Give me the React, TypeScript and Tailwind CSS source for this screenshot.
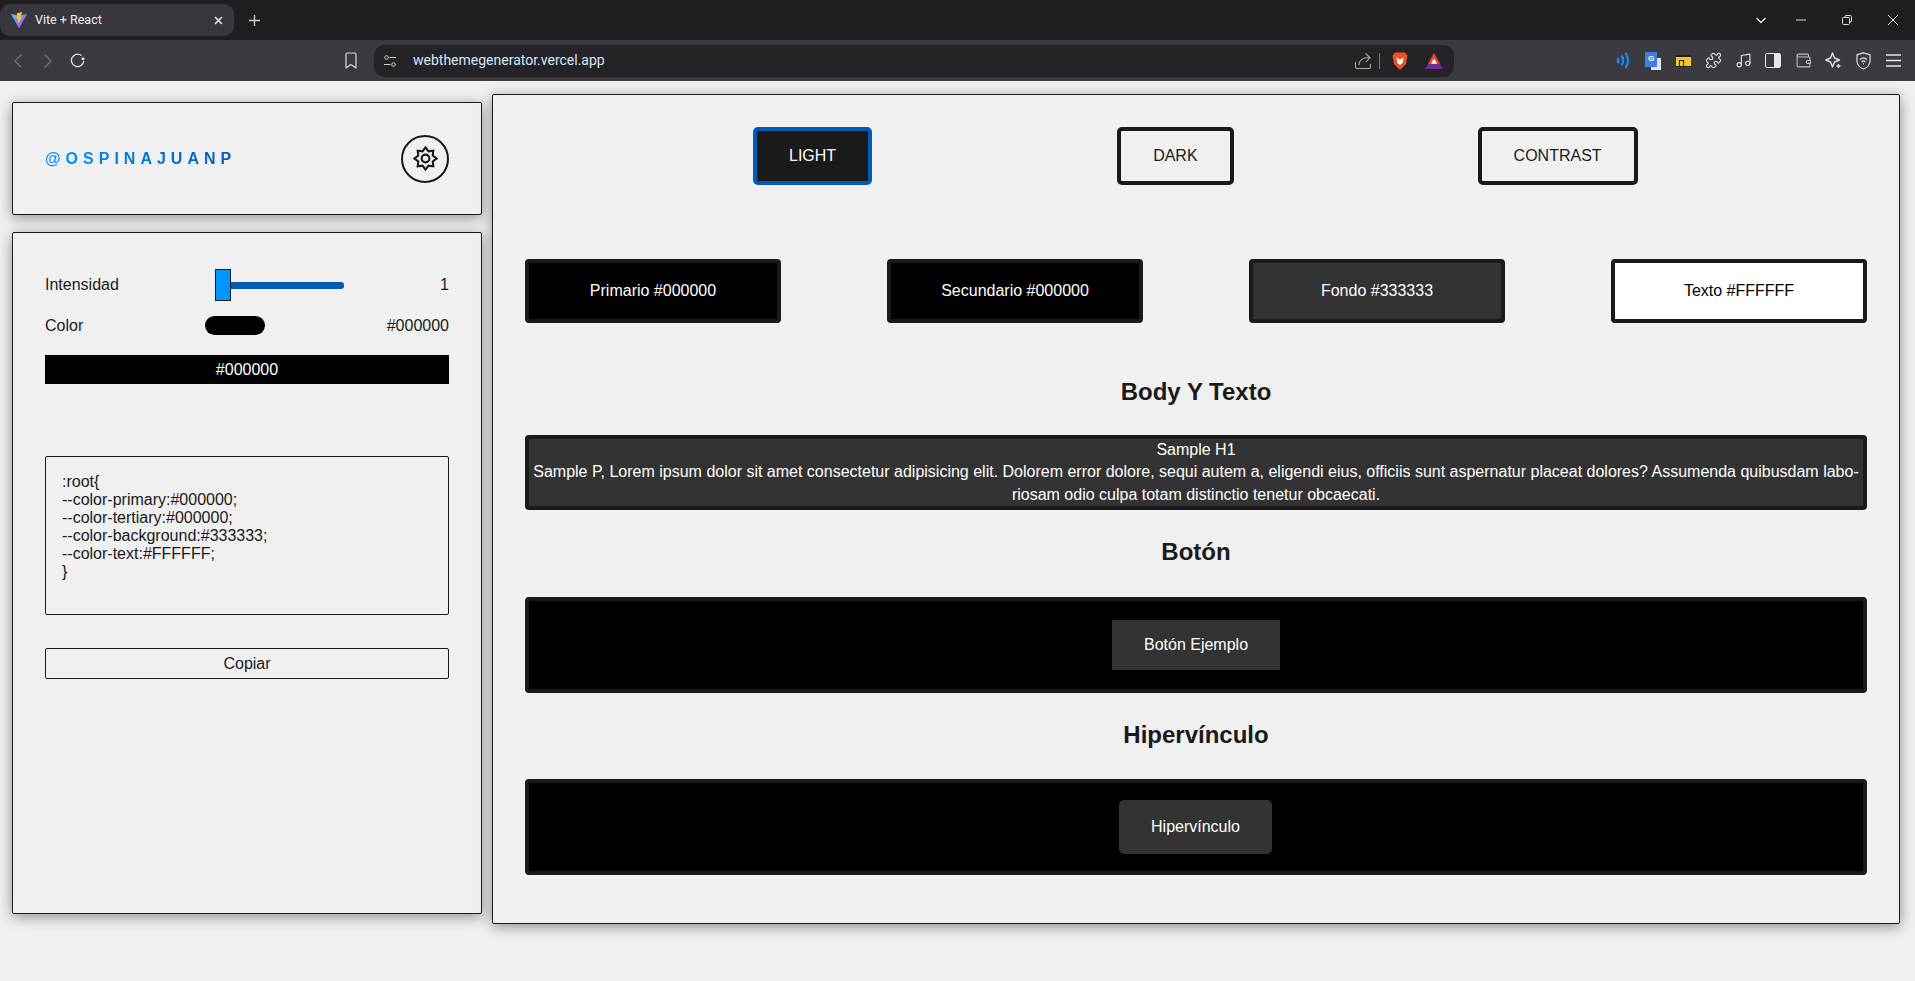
import { Music, Puzzle, Wallet } from 'lucide-react'

const font = "font-['Liberation_Sans',Arial,sans-serif]"

function ViteIcon() {
  return (
    <svg width="16" height="16" viewBox="0 0 16 16">
      <defs>
        <linearGradient id="viteBody" x1="0" y1="0" x2="1" y2="1">
          <stop offset="0" stopColor="#41d1ff" />
          <stop offset="1" stopColor="#bd34fe" />
        </linearGradient>
      </defs>
      <path d="M0 2 L8 3.4 L16 2 L8.3 16 Q8 16.4 7.7 16 Z" fill="url(#viteBody)" />
      <path d="M11.3 0 L6 1.2 L5.7 7.4 L7.4 7 L7 10.8 L7.8 11 L11.4 4.6 L9.6 5 Z" fill="#ffc517" />
    </svg>
  )
}

function BrowserChrome() {
  return (
    <div className="shrink-0">
      {/* Tab strip */}
      <div className="h-[40px] bg-[#1e1e22] flex items-center text-white">
        <div className="w-[234px] h-[32px] bg-[#37373d] rounded-[10px] flex items-center pl-[11px] pr-[11px]">
          <ViteIcon />
          <span className="ml-[8px] text-[12.5px] font-['Roboto',sans-serif] text-[#f0f0f0] flex-1">Vite + React</span>
          <svg width="9" height="9" viewBox="0 0 9 9" stroke="#e8e8e8" strokeWidth="1.6">
            <path d="M1 1 L8 8 M8 1 L1 8" />
          </svg>
        </div>
        <svg width="11" height="11" viewBox="0 0 11 11" stroke="#c8c8c8" strokeWidth="1.4" className="ml-[15px]">
          <path d="M5.5 0 V11 M0 5.5 H11" />
        </svg>
        <div className="ml-auto flex items-center mr-[17px]">
          <svg width="10" height="10" viewBox="0 0 10 10" fill="none" stroke="#e8e8e8" strokeWidth="1.4">
            <path d="M0.5 3 L5 7.5 L9.5 3" />
          </svg>
          <svg width="10" height="10" viewBox="0 0 10 10" stroke="#e0e0e0" strokeWidth="1" className="ml-[30px]">
            <path d="M0 5 H10" />
          </svg>
          <svg width="10" height="10" viewBox="0 0 10 10" fill="none" stroke="#e0e0e0" strokeWidth="1" className="ml-[36px]">
            <rect x="0.5" y="2.5" width="7" height="7" rx="1" />
            <path d="M3 2.5 V1.5 Q3 0.5 4 0.5 H8.5 Q9.5 0.5 9.5 1.5 V6 Q9.5 7 8 7" />
          </svg>
          <svg width="10" height="10" viewBox="0 0 10 10" stroke="#e0e0e0" strokeWidth="1" className="ml-[36px]">
            <path d="M0 0 L10 10 M10 0 L0 10" />
          </svg>
        </div>
      </div>
      {/* Toolbar */}
      <div className="h-[41px] bg-[#3a3a40] flex items-center">
        <svg width="8" height="14" viewBox="0 0 8 14" fill="none" stroke="#77777c" strokeWidth="1.2" className="ml-[14px]">
          <path d="M7.5 0.5 L0.8 7 L7.5 13.5" />
        </svg>
        <svg width="8" height="14" viewBox="0 0 8 14" fill="none" stroke="#77777c" strokeWidth="1.2" className="ml-[22px]">
          <path d="M0.5 0.5 L7.2 7 L0.5 13.5" />
        </svg>
        <svg width="16" height="15" viewBox="0 0 16 15" fill="none" stroke="#e6e6e6" strokeWidth="1.3" className="ml-[18px]">
          <path d="M11.5 2.5 A6.2 6.2 0 1 0 13.8 8" />
          <circle cx="13" cy="5.8" r="1.5" fill="#e6e6e6" stroke="none" />
        </svg>
        <svg width="12" height="17" viewBox="0 0 12 17" fill="none" stroke="#dadada" strokeWidth="1.2" strokeLinejoin="round" className="ml-[259px]">
          <path d="M1 2.5 Q1 1 2.5 1 H9.5 Q11 1 11 2.5 V16 L6 12.5 L1 16 Z" />
        </svg>
        <div className="ml-[17px] w-[1080px] h-[32px] bg-[#232328] rounded-[10px] flex items-center pl-[10px] pr-[11px]">
          <svg width="12" height="12" viewBox="0 0 12 12" fill="none" stroke="#cfcfcf" strokeWidth="1">
            <circle cx="2.5" cy="2.5" r="1.8" />
            <path d="M5.5 2.5 H12 M0 9.5 H6.5" />
            <circle cx="9.5" cy="9.5" r="1.8" />
          </svg>
          <span className="ml-[17px] text-[14px] font-['Roboto',sans-serif] text-[#d6e6f5]">webthemegenerator.vercel.app</span>
          <svg width="16" height="16" viewBox="0 0 16 16" fill="none" stroke="#a8a8a8" strokeWidth="1.1" className="ml-auto">
            <path d="M0.5 9 V14 Q0.5 15.5 2 15.5 H14 Q15.5 15.5 15.5 14 V11" />
            <path d="M4 12 C4 7 8 4.5 14.5 4.5 M10.5 0.5 L15 4.5 L11 9" />
          </svg>
          <div className="ml-[8px] w-px h-[16px] bg-[#77777c]" />
          <svg width="16" height="18" viewBox="0 0 16 18" className="ml-[12px]">
            <path d="M3 0.5 H13 L15.5 3.5 L14 12 L8 18 L2 12 L0.5 3.5 Z" fill="#f1501f" />
            <path d="M4.5 5.5 L8 7.5 L11.5 5.5 L10.5 11 L8 13 L5.5 11 Z" fill="#fff" />
          </svg>
          <svg width="18" height="16" viewBox="0 0 18 16" className="ml-[17px]">
            <path d="M9 0 L18 16 H0 Z" fill="#6b2c91" />
            <path d="M9 0 L15 10.7 H3 Z" fill="#f0431f" />
            <path d="M9 5 L12 10.7 H6 Z" fill="#fff" />
          </svg>
        </div>

        {/* Extensions */}
        <div className="ml-[154px] flex items-center">
          <div className="w-[30px] flex justify-center">
            <svg width="14" height="17" viewBox="0 0 14 17" fill="none" stroke="#1a8cf0" strokeWidth="2.2">
              <path d="M1.5 6 Q3.5 8.5 1.5 11" /><path d="M5.5 3.5 Q9 8.5 5.5 13.5" /><path d="M9.5 1 Q14.5 8.5 9.5 16" />
            </svg>
          </div>
          <div className="w-[30px] flex justify-center">
            <div className="relative w-[16px] h-[18px]">
              <div className="absolute left-[6px] top-[6px] w-[10px] h-[12px] bg-[#dfe3ea]" />
              <div className="absolute left-0 top-0 w-[12px] h-[15px] bg-[#3f7ee8] text-white text-[8px] font-bold flex items-center justify-center">G</div>
            </div>
          </div>
          <div className="w-[30px] flex justify-center">
            <div className="w-[15px] h-[12px] bg-[#f4c430] border-t-2 border-b border-[#222] flex items-end pl-[3px]">
              <div className="w-[5px] h-[6px] border-t border-x border-[#222]" />
            </div>
          </div>
          <div className="w-[30px] flex justify-center"><Puzzle size={17} strokeWidth={1.6} className="text-[#e0e0e0]" /></div>
          <div className="w-[30px] flex justify-center"><Music size={17} strokeWidth={1.6} className="text-[#e0e0e0]" /></div>
          <div className="w-[30px] flex justify-center">
            <div className="w-[16px] h-[15px] border border-[#e8e8e8] rounded-[2px] flex justify-end">
              <div className="w-[6px] h-full bg-[#e8e8e8]" />
            </div>
          </div>
          <div className="w-[30px] flex justify-center"><Wallet size={17} strokeWidth={1.6} className="text-[#bdbdbd]" /></div>
          <div className="w-[30px] flex justify-center">
            <svg width="17" height="17" viewBox="0 0 17 17" fill="none" stroke="#e0e0e0" strokeWidth="1.4" strokeLinejoin="round">
              <path d="M7.5 1 L9.5 6 L14.5 8 L9.5 10 L7.5 15 L5.5 10 L0.8 8 L5.5 6 Z" />
              <path d="M13.5 12 V16 M11.5 14 H15.5" />
            </svg>
          </div>
          <div className="w-[30px] flex justify-center">
            <svg width="15" height="18" viewBox="0 0 15 18" fill="none" stroke="#d0d0d0" strokeWidth="1.3">
              <path d="M7.5 0.8 L14 2.8 V9 C14 13 10.5 16 7.5 17 C4.5 16 1 13 1 9 V2.8 Z" />
              <path d="M4 7.5 Q7.5 4.5 11 7.5 M5.5 9.8 Q7.5 8.2 9.5 9.8" />
              <circle cx="7.5" cy="11.8" r="0.7" fill="#d0d0d0" stroke="none" />
            </svg>
          </div>
          <div className="w-[30px] flex justify-center">
            <svg width="15" height="13" viewBox="0 0 15 13" stroke="#e6e6e6" strokeWidth="1.3">
              <path d="M0 1 H15 M0 6.5 H15 M0 12 H15" />
            </svg>
          </div>
        </div>
      </div>
    </div>
  )
}

// eight sharp teeth, drawn as a star around a ring
function GearIcon() {
  return (
    <svg width="25" height="25" viewBox="0 0 26 26" fill="none" stroke="#1a1a1a" strokeWidth="2.2" strokeLinejoin="miter">
      <path d="M13 1.5 L16.1 5.5 L21.1 4.9 L20.5 9.9 L24.5 13 L20.5 16.1 L21.1 21.1 L16.1 20.5 L13 24.5 L9.9 20.5 L4.9 21.1 L5.5 16.1 L1.5 13 L5.5 9.9 L4.9 4.9 L9.9 5.5 Z" />
      <circle cx="13" cy="13" r="4" />
    </svg>
  )
}

function Sidebar() {
  return (
    <div className="w-[470px] shrink-0 mt-[21px] ml-[12px] flex flex-col gap-[17px]">
      <div className="h-[113px] px-[32px] bg-[#f0f0f0] border border-[#1a1a1a] rounded-[2px] shadow-[0_3px_14px_rgba(0,0,0,0.4)] flex items-center justify-between">
        <span className="text-[16px] font-bold tracking-[5px] bg-gradient-to-r from-[#0096ff] to-[#005bb5] bg-clip-text text-transparent">@OSPINAJUANP</span>
        <div className="w-[48px] h-[48px] rounded-full border-2 border-[#1a1a1a] flex items-center justify-center">
          <GearIcon />
        </div>
      </div>

      <div className="h-[682px] px-[32px] pt-[36px] bg-[#f0f0f0] border border-[#1a1a1a] rounded-[2px] shadow-[0_3px_14px_rgba(0,0,0,0.4)] text-[16px] text-[#1a1a1a]">
        <div className="h-[32px] flex items-center justify-between">
          <span className="w-[170px]">Intensidad</span>
          <div className="flex items-center flex-1">
            <div className="w-[16px] h-[32px] bg-[#0096ff] border border-[#1a1a1a]" />
            <div className="w-[113px] h-[7px] bg-[#005bb5] rounded-r-[3px]" />
          </div>
          <span>1</span>
        </div>
        <div className="h-[19px] mt-[15px] flex items-center justify-between">
          <span className="w-[160px]">Color</span>
          <div className="w-[60px] h-[19px] bg-black rounded-[10px]" />
          <span className="ml-auto">#000000</span>
        </div>
        <div className="mt-[20px] h-[29px] bg-black text-white flex items-center justify-center">#000000</div>

        <div className="mt-[72px] h-[159px] px-[16px] pt-[16px] border border-[#1a1a1a] rounded-[2px] leading-[18px]">
          <p>:root&#123;</p>
          <p>--color-primary:#000000;</p>
          <p>--color-tertiary:#000000;</p>
          <p>--color-background:#333333;</p>
          <p>--color-text:#FFFFFF;</p>
          <p>&#125;</p>
        </div>

        <button className="mt-[33px] w-full h-[31px] border border-[#1a1a1a] rounded-[2px] text-[#1a1a1a]">Copiar</button>
      </div>
    </div>
  )
}

function ModeButton({ label, active }: { label: string; active?: boolean }) {
  return (
    <button
      className={`h-[58px] px-[32px] border-4 rounded-[5px] text-[16px] ${
        active ? 'bg-[#1a1a1a] border-[#005bb5] text-white' : 'border-[#1a1a1a] text-[#1a1a1a]'
      }`}
    >
      {label}
    </button>
  )
}

function Swatch({ label, className }: { label: string; className: string }) {
  return (
    <div className={`w-[256px] h-[64px] border-4 border-[#1a1a1a] rounded-[4px] flex items-center justify-center text-[16px] ${className}`}>
      {label}
    </div>
  )
}

function Heading({ children }: { children: string }) {
  return <h2 className="text-[24px] font-bold text-[#1a1a1a] text-center leading-[28px]">{children}</h2>
}

function Preview() {
  return (
    <div className="w-[1408px] h-[830px] shrink-0 mt-[13px] ml-[10px] px-[32px] pt-[32px] bg-[#f0f0f0] border border-[#1a1a1a] rounded-[2px] shadow-[0_3px_14px_rgba(0,0,0,0.4)]">
      <div className="flex pl-[228px]">
        <ModeButton label="LIGHT" active />
        <div className="ml-[245px]"><ModeButton label="DARK" /></div>
        <div className="ml-[244px]"><ModeButton label="CONTRAST" /></div>
      </div>

      <div className="mt-[74px] flex justify-between">
        <Swatch label="Primario #000000" className="bg-black text-white" />
        <Swatch label="Secundario #000000" className="bg-black text-white" />
        <Swatch label="Fondo #333333" className="bg-[#333333] text-white" />
        <Swatch label="Texto #FFFFFF" className="bg-white text-black" />
      </div>

      <div className="mt-[55px]"><Heading>Body Y Texto</Heading></div>
      <div className="mt-[29px] h-[75px] border-4 border-[#1a1a1a] rounded-[4px] bg-[#333333] text-white text-center text-[16px]">
        <p className="leading-[21px]">Sample H1</p>
        <p className="leading-[23px]">Sample P, Lorem ipsum dolor sit amet consectetur adipisicing elit. Dolorem error dolore, sequi autem a, eligendi eius, officiis sunt aspernatur placeat dolores? Assumenda quibusdam labo&shy;riosam odio culpa totam distinctio tenetur obcaecati.</p>
      </div>

      <div className="mt-[28px]"><Heading>Botón</Heading></div>
      <div className="mt-[31px] h-[96px] border-4 border-[#1a1a1a] rounded-[4px] bg-black flex items-center justify-center">
        <button className="w-[168px] h-[50px] bg-[#333333] text-white text-[16px]">Botón Ejemplo</button>
      </div>

      <div className="mt-[28px]"><Heading>Hipervínculo</Heading></div>
      <div className="mt-[30px] h-[96px] border-4 border-[#1a1a1a] rounded-[4px] bg-black flex items-center justify-center">
        <a className="w-[153px] h-[54px] mr-[1px] bg-[#333333] text-white text-[16px] rounded-[5px] flex items-center justify-center">Hipervínculo</a>
      </div>
    </div>
  )
}

export default function App() {
  return (
    <div className={`h-[981px] overflow-hidden flex flex-col bg-[#f0f0f0] ${font}`} lang="es">
      <BrowserChrome />
      <div className="flex items-start">
        <Sidebar />
        <Preview />
      </div>
    </div>
  )
}
